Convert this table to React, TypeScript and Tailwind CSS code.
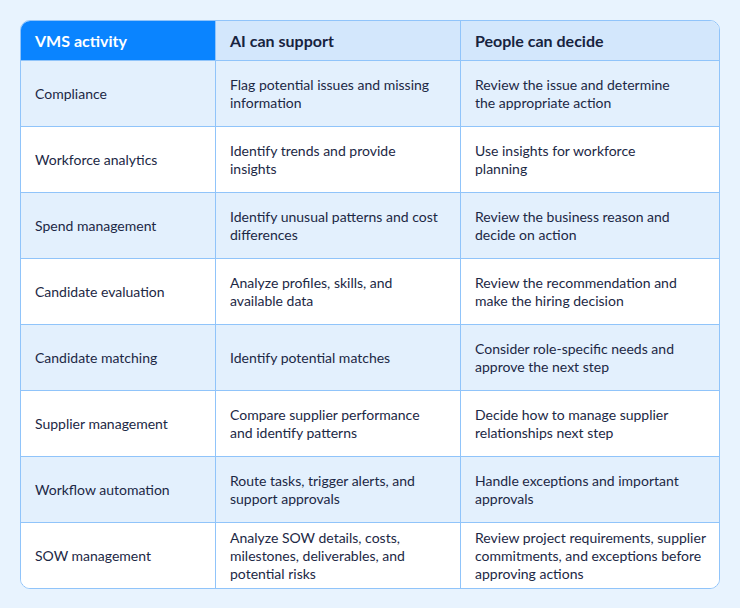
import React from "react";

const rows: [string, string[], string[]][] = [
  ["Compliance", ["Flag potential issues and missing", "information"], ["Review the issue and determine", "the appropriate action"]],
  ["Workforce analytics", ["Identify trends and provide", "insights"], ["Use insights for workforce", "planning"]],
  ["Spend management", ["Identify unusual patterns and cost", "differences"], ["Review the business reason and", "decide on action"]],
  ["Candidate evaluation", ["Analyze profiles, skills, and", "available data"], ["Review the recommendation and", "make the hiring decision"]],
  ["Candidate matching", ["Identify potential matches"], ["Consider role-specific needs and", "approve the next step"]],
  ["Supplier management", ["Compare supplier performance", "and identify patterns"], ["Decide how to manage supplier", "relationships next step"]],
  ["Workflow automation", ["Route tasks, trigger alerts, and", "support approvals"], ["Handle exceptions and important", "approvals"]],
  ["SOW management", ["Analyze SOW details, costs,", "milestones, deliverables, and", "potential risks"], ["Review project requirements, supplier", "commitments, and exceptions before", "approving actions"]],
];

function Lines({ lines }: { lines: string[] }) {
  return (
    <div className="flex flex-col">
      {lines.map((l, i) => (
        <span key={i} className="whitespace-nowrap">{l}</span>
      ))}
    </div>
  );
}

export default function App() {
  return (
    <div
      className="w-[740px] h-[608px] bg-[#e8f3fe] p-[20px]"
      style={{ fontFamily: "Lato, 'Noto Sans', sans-serif" }}
    >
      <div className="w-[700px] border border-[#90c4fa] rounded-[10px] overflow-hidden bg-white">
        <div className="grid grid-cols-[194px_245px_1fr] h-[39px] text-[16px] font-bold">
          <div className="bg-[#0a84ff] text-white flex items-center px-[14px]">VMS activity</div>
          <div className="bg-[#d3e7fc] text-[#17233f] border-l border-[#90c4fa] flex items-center px-[14px]">AI can support</div>
          <div className="bg-[#d3e7fc] text-[#17233f] border-l border-[#90c4fa] flex items-center px-[14px]">People can decide</div>
        </div>
        {rows.map((r, i) => (
          <div
            key={i}
            className={
              "grid grid-cols-[194px_245px_1fr] h-[66px] border-t border-[#90c4fa] text-[14px] leading-[18px] text-[#1c2845] " +
              (i % 2 === 0 ? "bg-[#e3f0fd]" : "bg-white")
            }
          >
            <div className="flex items-center px-[14px]">{r[0]}</div>
            <div className="flex items-center px-[14px] border-l border-[#90c4fa]">
              <Lines lines={r[1]} />
            </div>
            <div className="flex items-center pl-[14px] pr-[12px] border-l border-[#90c4fa]">
              <Lines lines={r[2]} />
            </div>
          </div>
        ))}
      </div>
    </div>
  );
}
